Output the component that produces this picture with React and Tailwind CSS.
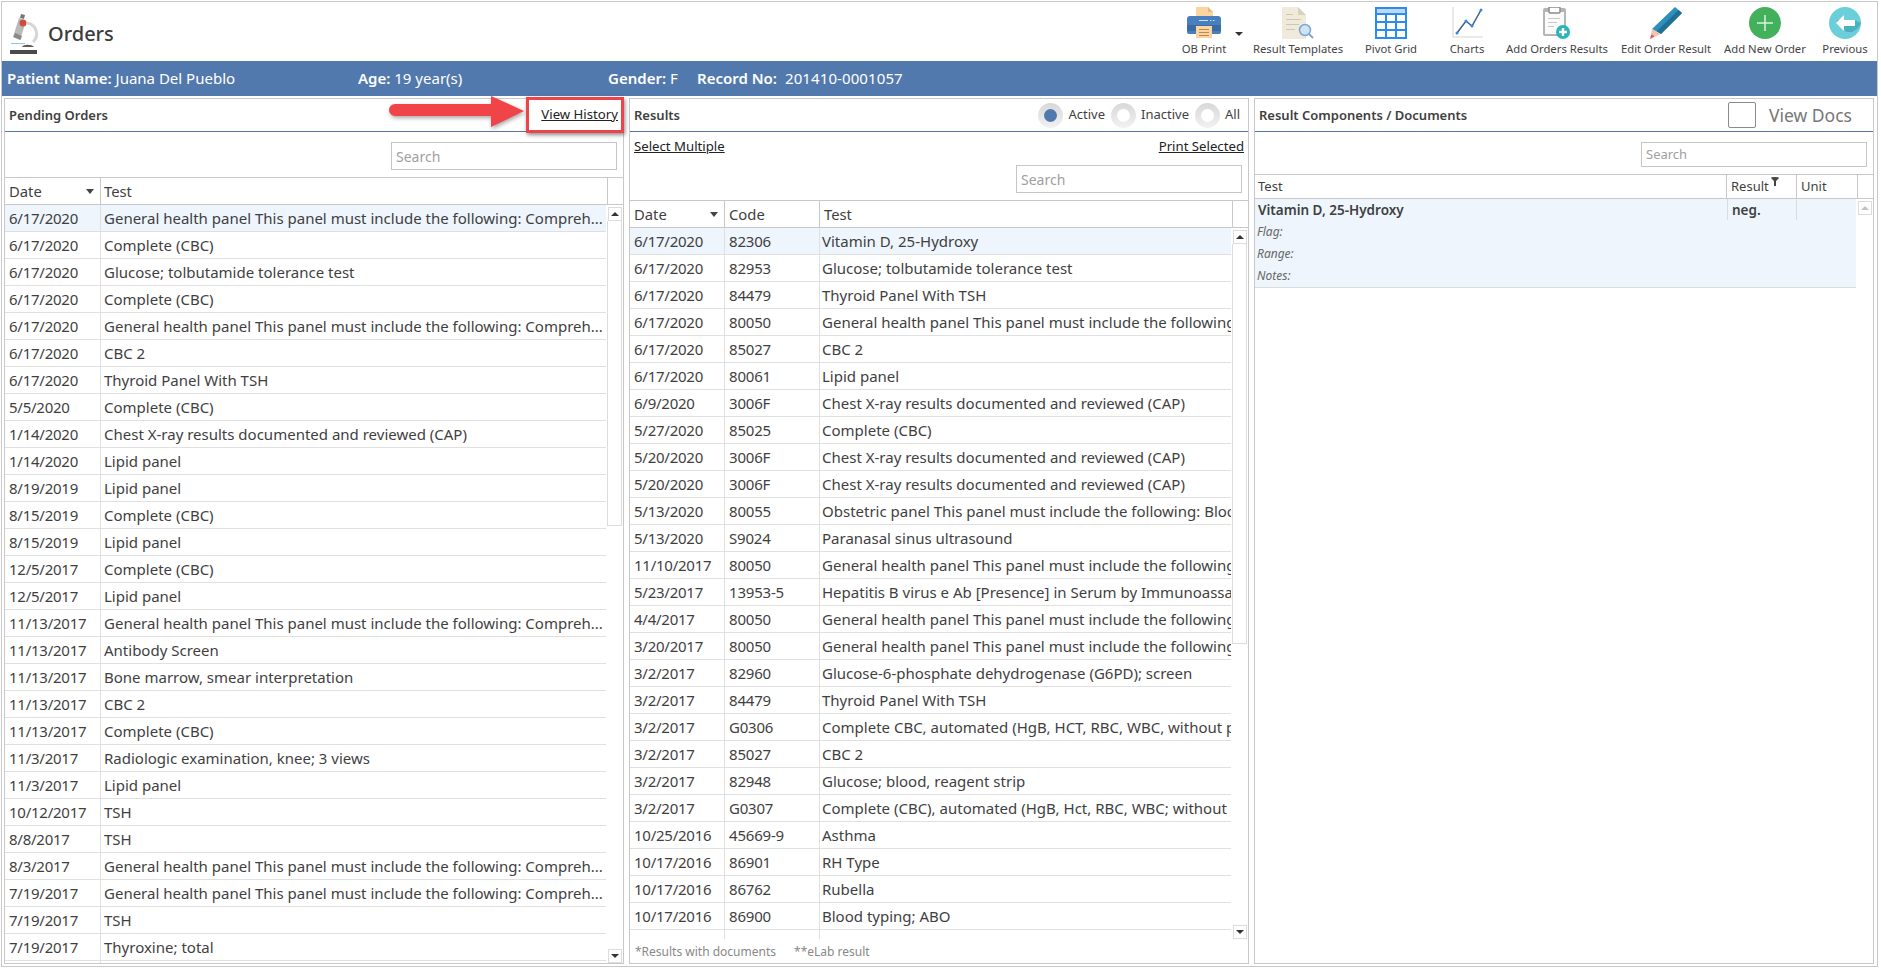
const GHP = "General health panel This panel must include the following: Compreh...";
const GHP2 = "General health panel This panel must include the following";

const pendientes = [
  ["6/17/2020", GHP],
  ["6/17/2020", "Complete (CBC)"],
  ["6/17/2020", "Glucose; tolbutamide tolerance test"],
  ["6/17/2020", "Complete (CBC)"],
  ["6/17/2020", GHP],
  ["6/17/2020", "CBC 2"],
  ["6/17/2020", "Thyroid Panel With TSH"],
  ["5/5/2020", "Complete (CBC)"],
  ["1/14/2020", "Chest X-ray results documented and reviewed (CAP)"],
  ["1/14/2020", "Lipid panel"],
  ["8/19/2019", "Lipid panel"],
  ["8/15/2019", "Complete (CBC)"],
  ["8/15/2019", "Lipid panel"],
  ["12/5/2017", "Complete (CBC)"],
  ["12/5/2017", "Lipid panel"],
  ["11/13/2017", GHP],
  ["11/13/2017", "Antibody Screen"],
  ["11/13/2017", "Bone marrow, smear interpretation"],
  ["11/13/2017", "CBC 2"],
  ["11/13/2017", "Complete (CBC)"],
  ["11/3/2017", "Radiologic examination, knee; 3 views"],
  ["11/3/2017", "Lipid panel"],
  ["10/12/2017", "TSH"],
  ["8/8/2017", "TSH"],
  ["8/3/2017", GHP],
  ["7/19/2017", GHP],
  ["7/19/2017", "TSH"],
  ["7/19/2017", "Thyroxine; total"],
  ["", ""],
];

const resultados = [
  ["6/17/2020", "82306", "Vitamin D, 25-Hydroxy"],
  ["6/17/2020", "82953", "Glucose; tolbutamide tolerance test"],
  ["6/17/2020", "84479", "Thyroid Panel With TSH"],
  ["6/17/2020", "80050", GHP2],
  ["6/17/2020", "85027", "CBC 2"],
  ["6/17/2020", "80061", "Lipid panel"],
  ["6/9/2020", "3006F", "Chest X-ray results documented and reviewed (CAP)"],
  ["5/27/2020", "85025", "Complete (CBC)"],
  ["5/20/2020", "3006F", "Chest X-ray results documented and reviewed (CAP)"],
  ["5/20/2020", "3006F", "Chest X-ray results documented and reviewed (CAP)"],
  ["5/13/2020", "80055", "Obstetric panel This panel must include the following: Bloo"],
  ["5/13/2020", "S9024", "Paranasal sinus ultrasound"],
  ["11/10/2017", "80050", GHP2],
  ["5/23/2017", "13953-5", "Hepatitis B virus e Ab [Presence] in Serum by Immunoassa"],
  ["4/4/2017", "80050", GHP2],
  ["3/20/2017", "80050", GHP2],
  ["3/2/2017", "82960", "Glucose-6-phosphate dehydrogenase (G6PD); screen"],
  ["3/2/2017", "84479", "Thyroid Panel With TSH"],
  ["3/2/2017", "G0306", "Complete CBC, automated (HgB, HCT, RBC, WBC, without p"],
  ["3/2/2017", "85027", "CBC 2"],
  ["3/2/2017", "82948", "Glucose; blood, reagent strip"],
  ["3/2/2017", "G0307", "Complete (CBC), automated (HgB, Hct, RBC, WBC; without"],
  ["10/25/2016", "45669-9", "Asthma"],
  ["10/17/2016", "86901", "RH Type"],
  ["10/17/2016", "86762", "Rubella"],
  ["10/17/2016", "86900", "Blood typing; ABO"],
  ["10/17/2016", "86592", "VDRL"],
];

function IconPrinter() {
  return (
    <svg width="34" height="31" viewBox="0 0 34 31">
      <path d="M9 0h12l5 5v7H9z" fill="#fbd4a0" />
      <path d="M21 0l5 5h-5z" fill="#e8b880" />
      <path d="M3 9h28a3 3 0 0 1 3 3v13a2 2 0 0 1-2 2H2a2 2 0 0 1-2-2V12a3 3 0 0 1 3-3z" fill="#4a7fbd" />
      <rect x="0" y="18" width="34" height="6" fill="#3a6ba5" />
      <rect x="12" y="13" width="9" height="1" fill="#cfe0f2" />
      <rect x="23" y="13" width="1.5" height="1" fill="#cfe0f2" />
      <rect x="26" y="13" width="1.5" height="1" fill="#cfe0f2" />
      <rect x="9" y="19" width="16" height="12" fill="#fbd4a0" />
      <rect x="12" y="22" width="10" height="1" fill="#b98a55" />
      <rect x="12" y="25" width="10" height="1" fill="#b98a55" />
      <rect x="12" y="28" width="10" height="1" fill="#b98a55" />
    </svg>
  );
}

function IconTemplates() {
  return (
    <svg width="32" height="32" viewBox="0 0 32 32">
      <path d="M0 0h16l8 8v24H0z" fill="#efead9" />
      <path d="M16 0l8 8h-8z" fill="#d9d2ba" />
      <rect x="4" y="7" width="7" height="1" fill="#cfc8b0" />
      <rect x="4" y="12" width="15" height="1" fill="#cfc8b0" />
      <rect x="4" y="17" width="13" height="1" fill="#cfc8b0" />
      <rect x="4" y="22" width="9" height="1" fill="#cfc8b0" />
      <circle cx="23" cy="23" r="5.5" fill="#cfe3f7" stroke="#7fa6cf" strokeWidth="1.5" />
      <path d="M27 27l4 4" stroke="#7fa6cf" strokeWidth="2" />
    </svg>
  );
}

function IconPivot() {
  return (
    <svg width="32" height="32" viewBox="0 0 32 32" fill="none">
      <rect x="1" y="1" width="30" height="30" fill="#fff" stroke="#2a8cf0" strokeWidth="2" />
      <rect x="1" y="1" width="30" height="6" fill="#bcd9f7" stroke="#2a8cf0" strokeWidth="2" />
      <path d="M11 7v24M21 7v24M1 15h30M1 23h30" stroke="#2a8cf0" strokeWidth="2" />
    </svg>
  );
}

function IconCharts() {
  return (
    <svg width="32" height="32" viewBox="0 0 32 32" fill="none">
      <path d="M2 0v30h30" stroke="#e4e4e4" strokeWidth="1.5" />
      <path d="M6 26l9-12 6 5 9-16" stroke="#3c5f8a" strokeWidth="1.5" />
      <circle cx="6" cy="26" r="1.5" fill="#2a8cf0" />
      <circle cx="15" cy="14" r="1.5" fill="#2a8cf0" />
      <circle cx="21" cy="19" r="1.5" fill="#2a8cf0" />
      <circle cx="30" cy="3" r="1.5" fill="#2a8cf0" />
    </svg>
  );
}

function IconAddOrders() {
  return (
    <svg width="28" height="32" viewBox="0 0 28 32">
      <rect x="0" y="1" width="23" height="28" rx="2" fill="#b5b5b5" />
      <rect x="2" y="5" width="19" height="22" fill="#fafafa" />
      <rect x="6" y="0" width="11" height="6" rx="1" fill="#fff" stroke="#8c8c8c" strokeWidth="1.5" />
      <rect x="5" y="11" width="12" height="1" fill="#c8c8c8" />
      <rect x="5" y="15" width="9" height="1" fill="#c8c8c8" />
      <rect x="5" y="19" width="6" height="1" fill="#c8c8c8" />
      <circle cx="20" cy="25" r="7" fill="#26b5ba" />
      <path d="M20 21v8M16 25h8" stroke="#fff" strokeWidth="2.4" />
    </svg>
  );
}

function IconPencil() {
  return (
    <svg width="32" height="32" viewBox="0 0 32 32">
      <path d="M25 0l7 6-21 21-9-5z" fill="#2f8fbb" />
      <path d="M28.5 3l3.5 3-21 21-4.500-2.500z" fill="#1f6f96" />
      <path d="M2 22l9 5-11 5z" fill="#f3c3ae" />
      <path d="M0 32l1.500-4.500 3 1.800z" fill="#d9534f" />
    </svg>
  );
}

function IconAddNew() {
  return (
    <svg width="32" height="32" viewBox="0 0 32 32">
      <circle cx="16" cy="16" r="16" fill="#43b05c" />
      <path d="M16 8v16M8 16h16" stroke="#d9f2df" strokeWidth="1.500" />
    </svg>
  );
}

function IconPrevious() {
  return (
    <svg width="32" height="32" viewBox="0 0 32 32">
      <circle cx="16" cy="16" r="16" fill="#6bcfd9" />
      <path d="M8 16l9 9 h6 a16 16 0 0 0 9-9l-7-3H8z" fill="#4bb1bd" />
      <path d="M15 8l-8 8 8 8v-5h11v-6H15z" fill="#fff" />
    </svg>
  );
}

function IconMicroscope() {
  return (
    <svg width="30" height="42" viewBox="0 0 30 42" fill="none">
      <path d="M17 10a11 11 0 0 1 6 19" stroke="#d5d5d5" strokeWidth="3" />
      <path d="M11 1l4 1-1 4-4-1z" fill="#777" />
      <path d="M9 5l7 3-6 19-7-3z" fill="#b9b9b9" />
      <path d="M5 20l7 3-1.500 4-7-3z" fill="#8a8a8a" />
      <circle cx="13" cy="10" r="3.500" fill="#c8503c" />
      <rect x="1" y="30" width="14" height="1" fill="#8fc4ee" />
      <path d="M12 34c1-3 10-3 12 0z" fill="#5c5c5c" />
      <rect x="0" y="37" width="27" height="4" fill="#4a4a4a" />
    </svg>
  );
}

const tools = [
  { label: "OB Print", icon: <IconPrinter />, w: "w-[94px]", caret: true },
  { label: "Result Templates", icon: <IconTemplates />, w: "w-[94px]" },
  { label: "Pivot Grid", icon: <IconPivot />, w: "w-[92px]" },
  { label: "Charts", icon: <IconCharts />, w: "w-[60px]" },
  { label: "Add Orders Results", icon: <IconAddOrders />, w: "w-[120px]" },
  { label: "Edit Order Result", icon: <IconPencil />, w: "w-[98px]" },
  { label: "Add New Order", icon: <IconAddNew />, w: "w-[100px]" },
  { label: "Previous", icon: <IconPrevious />, w: "w-[60px]" },
];

function Buscador({ alto = "h-[28px]", texto = "text-[14px]" }) {
  return (
    <div className={`w-[226px] ${alto} ${texto} border border-[#c6c6c6] bg-white flex items-center px-[4px] pt-px text-[#a0a0a0]`}>
      Search
    </div>
  );
}

function Scrollbar({ thumbAlto, gris }) {
  return (
    <div className="absolute right-0 top-0 bottom-0 w-[17px] bg-white flex flex-col items-center">
      <div className="mt-[2px] w-[14px] h-[14px] border border-[#dcdcdc] bg-white flex items-center justify-center">
        <span className={`w-0 h-0 border-x-[4px] border-x-transparent border-b-[4px] ${gris ? "border-b-[#c4c4c4]" : "border-b-[#333]"}`} />
      </div>
      {thumbAlto ? <div className={`w-[15px] ${thumbAlto} border-x border-b border-[#dcdcdc]`} /> : null}
      {!gris ? (
        <div className="mt-auto w-[14px] h-[14px] border border-[#dcdcdc] bg-white flex items-center justify-center">
          <span className="w-0 h-0 border-x-[4px] border-x-transparent border-t-[4px] border-t-[#333]" />
        </div>
      ) : null}
    </div>
  );
}

export default function App() {
  return (
    <div
      className="relative w-[1881px] h-[969px] overflow-hidden bg-white pt-px pl-px text-[#3f3f3f] text-[15px]"
      style={{ fontFamily: '"Noto Sans", "Open Sans", sans-serif' }}
    >
      <div className="w-[1877px] h-[966px] border border-[#c8c8c8] flex flex-col">
        {/* cabecera */}
        <div className="h-[59px] shrink-0 flex items-start justify-between">
          <div className="flex items-center pl-[8px] pt-[11px]">
            <IconMicroscope />
            <span className="ml-[8px] text-[20px] font-medium text-[#3b3b3b] leading-none">Orders</span>
          </div>
          <div className="flex pr-[2px]">
            {tools.map((t) => (
              <div key={t.label} className={`relative ${t.w} flex flex-col items-center pt-[5px]`}>
                <div className="h-[33px] flex items-start justify-center">{t.icon}</div>
                <div className="text-[11.3px] leading-[18px] whitespace-nowrap text-[#444]">{t.label}</div>
                {t.caret ? (
                  <div className="absolute left-[78px] top-[30px] w-0 h-0 border-x-[4px] border-x-transparent border-t-[4px] border-t-[#333]" />
                ) : null}
              </div>
            ))}
          </div>
        </div>

        {/* paciente */}
        <div className="h-[35px] shrink-0 bg-[#5279ae] text-white text-[15px] flex items-center pl-[5px]">
          <div className="w-[351px]"><b className="font-semibold">Patient Name:</b> Juana Del Pueblo</div>
          <div className="w-[250px]"><b className="font-semibold">Age:</b> 19 year(s)</div>
          <div className="w-[89px]"><b className="font-semibold">Gender:</b> F</div>
          <div className="w-[88px] font-semibold">Record No:</div>
          <div className="tracking-[0.1px]">201410-0001057</div>
        </div>

        <div className="flex-1 min-h-0 flex pt-[2px] pl-[2px] pb-[2px] gap-[5px]">
          {/* Pending Orders */}
          <div className="w-[620px] flex flex-col border border-[#c8c8c8]">
            <div className="h-[33px] shrink-0 border-b border-[#5279ae] flex items-center justify-between px-[4px]">
              <span className="font-semibold text-[13px] pt-px">Pending Orders</span>
              <span className="underline text-[#222] text-[13.2px] pr-px">View History</span>
            </div>
            <div className="h-[45px] shrink-0 flex justify-end items-start pt-[10px] pr-[6px]">
              <Buscador />
            </div>
            <div className="h-[28px] shrink-0 flex border-y border-[#c8c8c8] text-[14.8px]">
              <div className="w-[96px] flex items-center justify-between px-[4px] border-r border-[#c8c8c8]">
                Date
                <span className="w-0 h-0 border-x-[4px] border-x-transparent border-t-[5px] border-t-[#444] mr-[2px]" />
              </div>
              <div className="w-[507px] px-[3px] flex items-center border-r border-[#c8c8c8]">Test</div>
            </div>
            <div className="relative flex-1 min-h-0 overflow-hidden">
              <div className="w-[603px]">
                {pendientes.map((r, i) => (
                  <div key={i} className={`h-[27px] flex items-center border-b border-[#e0e0e0] ${i === 0 ? "bg-[#eef5fc]" : ""}`}>
                    <div className="w-[96px] h-full shrink-0 px-[4px] pt-px flex items-center border-r border-[#e0e0e0] tracking-[-0.25px]">{r[0]}</div>
                    <div className="flex-1 min-w-0 px-[3px] pt-px whitespace-nowrap overflow-hidden">{r[1]}</div>
                  </div>
                ))}
              </div>
              <Scrollbar thumbAlto="h-[305px]" />
            </div>
          </div>

          {/* Results */}
          <div className="w-[620px] flex flex-col border border-[#c8c8c8]">
            <div className="h-[33px] shrink-0 border-b border-[#5279ae] flex items-center justify-between pl-[4px] pr-[7px]">
              <span className="font-semibold text-[13px] pt-px">Results</span>
              <div className="flex items-center text-[13px]">
                {[["Active", true], ["Inactive", false], ["All", false]].map(([nombre, activo]) => (
                  <div key={nombre} className="flex items-center ml-[5px]">
                    <span className="w-[25px] h-[25px] rounded-full bg-linear-to-b from-[#d8d8d8] to-[#f2f2f2] flex items-center justify-center">
                      <span className={`w-[13px] h-[13px] rounded-full ${activo ? "bg-[#5279ae]" : "bg-white"}`} />
                    </span>
                    <span className="ml-[5px] mr-px">{nombre}</span>
                  </div>
                ))}
              </div>
            </div>
            <div className="h-[68px] shrink-0 px-[4px]">
              <div className="flex justify-between pt-[4px] text-[13.2px] leading-[20px] text-[#222] underline">
                <span>Select Multiple</span>
                <span>Print Selected</span>
              </div>
              <div className="flex justify-end pr-[2px] pt-[9px]">
                <Buscador />
              </div>
            </div>
            <div className="h-[28px] shrink-0 flex border-y border-[#c8c8c8] text-[14.8px]">
              <div className="w-[95px] flex items-center justify-between px-[4px] border-r border-[#c8c8c8]">
                Date
                <span className="w-0 h-0 border-x-[4px] border-x-transparent border-t-[5px] border-t-[#444] mr-[2px]" />
              </div>
              <div className="w-[95px] px-[4px] flex items-center border-r border-[#c8c8c8]">Code</div>
              <div className="w-[413px] px-[4px] flex items-center border-r border-[#c8c8c8]">Test</div>
            </div>
            <div className="relative flex-1 min-h-0 overflow-hidden">
              <div className="w-[603px]">
                {resultados.map((r, i) => (
                  <div key={i} className={`h-[27px] flex items-center border-b border-[#e0e0e0] ${i === 0 ? "bg-[#eef5fc]" : ""}`}>
                    <div className="w-[95px] h-full shrink-0 px-[4px] pt-px flex items-center border-r border-[#e0e0e0] tracking-[-0.25px]">{r[0]}</div>
                    <div className="w-[95px] h-full shrink-0 px-[4px] pt-px flex items-center border-r border-[#e0e0e0] tracking-[-0.2px]">{r[1]}</div>
                    <div className="flex-1 min-w-0 px-[2px] pt-px overflow-hidden whitespace-nowrap">{r[2]}</div>
                  </div>
                ))}
              </div>
              <Scrollbar thumbAlto="h-[400px]" />
            </div>
            <div className="h-[24px] shrink-0 bg-white flex items-center pl-[5px] pt-[2px] text-[12px] text-[#888]">
              <span>*Results with documents</span>
              <span className="ml-[18px]">**eLab result</span>
            </div>
          </div>

          {/* Result Components */}
          <div className="w-[620px] flex flex-col border border-[#c8c8c8]">
            <div className="h-[33px] shrink-0 border-b border-[#5279ae] flex items-center justify-between pl-[4px]">
              <span className="font-semibold text-[13px] pt-px">Result Components / Documents</span>
              <div className="flex items-center pr-[21px]">
                <span className="w-[28px] h-[26px] rounded-[2px] border border-[#8a8a8a] bg-white" />
                <span className="ml-[13px] text-[17.5px] text-[#777]">View Docs</span>
              </div>
            </div>
            <div className="h-[42px] shrink-0 flex justify-end items-start pt-[10px] pr-[6px]">
              <Buscador alto="h-[25px]" texto="text-[13px]" />
            </div>
            <div className="h-[25px] shrink-0 flex border-y border-[#c8c8c8] text-[13px]">
              <div className="w-[472px] px-[3px] flex items-center border-r border-[#c8c8c8]">Test</div>
              <div className="w-[70px] px-[4px] flex items-center border-r border-[#c8c8c8] relative">
                Result
                <svg className="absolute left-[44px] top-[2px]" width="8" height="9" viewBox="0 0 8 9">
                  <path d="M0 1a4 1 0 0 1 8 0L5 4v5H3V4z" fill="#444" />
                </svg>
              </div>
              <div className="w-[61px] px-[4px] flex items-center border-r border-[#c8c8c8]">Unit</div>
            </div>
            <div className="relative flex-1 min-h-0">
              <div className="w-[603px] h-[89px] bg-[#eef5fc] border-b border-[#dcdcdc] italic text-[12px] text-[#666]">
                <div className="h-[21px] flex not-italic font-semibold text-[13.5px] text-[#3f3f3f]">
                  <div className="w-[472px] px-[3px] pt-px flex items-center">Vitamin D, 25-Hydroxy</div>
                  <div className="w-[70px] px-[4px] pt-px flex items-center border-x border-[#dcdcdc]">neg.</div>
                  <div className="w-[60px] border-r border-transparent" />
                </div>
                <div className="h-[23px] px-[2px] flex items-center">Flag:</div>
                <div className="h-[22px] px-[2px] flex items-center">Range:</div>
                <div className="h-[22px] px-[2px] flex items-center">Notes:</div>
              </div>
              <Scrollbar gris />
            </div>
          </div>
        </div>
      </div>

      {/* flecha y recuadro que marcan View History */}
      <svg className="absolute left-[385px] top-[92px]" width="145" height="40" viewBox="0 0 145 40">
        <path d="M10 12h96V4l33 15-33 16V24H10a6 6 0 0 1 0-12z" fill="#f04448" style={{ filter: "drop-shadow(1px 2px 2px rgba(0,0,0,.35))" }} />
      </svg>
      <div className="absolute left-[526px] top-[97px] w-[98px] h-[36px] border-[3px] border-[#ee4349] shadow-[1px_2px_4px_rgba(0,0,0,.45)]" />
    </div>
  );
}
